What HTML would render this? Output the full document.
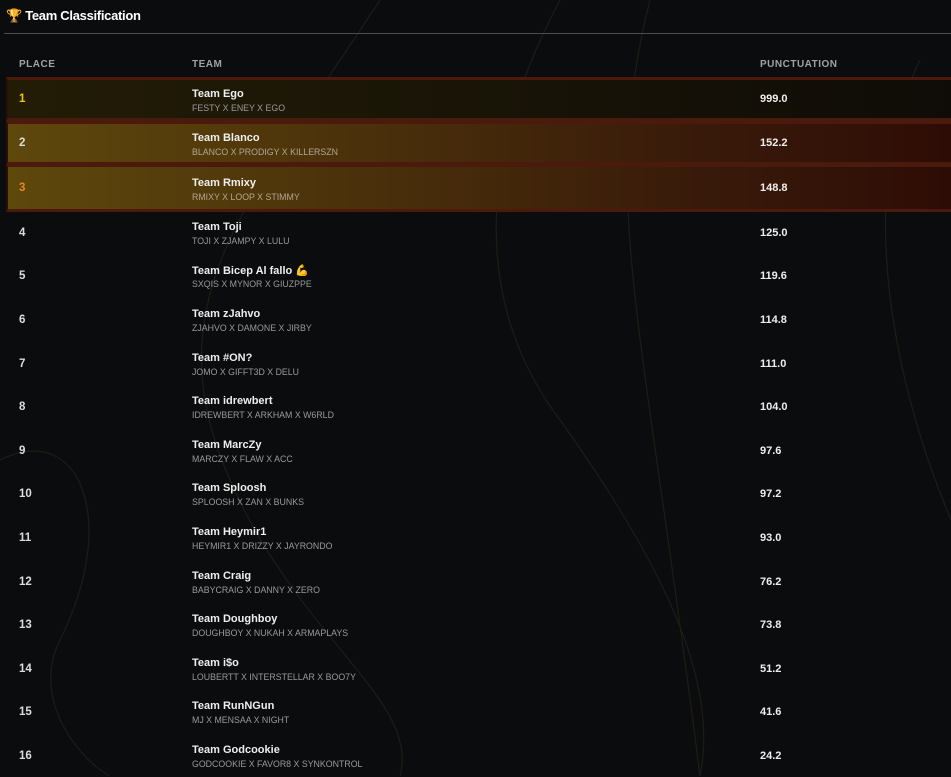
<!DOCTYPE html>
<html><head><meta charset="utf-8"><style>
*{margin:0;padding:0;box-sizing:border-box}
body{width:951px;height:776px;overflow:hidden;background:#0b0c0e;font-family:"Liberation Sans",sans-serif;position:relative;color:#e8e8e8}
.title{position:absolute;left:6px;top:8px;font-weight:bold;font-size:13px;color:#fff;letter-spacing:-0.3px}
.hr{position:absolute;left:4px;right:0;top:33px;height:1px;background:#4a4c50}
.th{position:absolute;top:59px;font-size:10px;font-weight:bold;color:#a0a2a6;letter-spacing:0.5px;font-family:"Liberation Sans Narrow","Liberation Sans",sans-serif}
.row{position:absolute;left:6px;right:0;height:43px}
.pl{position:absolute;left:13px;top:50%;transform:translateY(-50%);font-size:11.5px;font-weight:bold;color:#ddd}
.nm{position:absolute;left:186px;top:10px;font-size:11px;font-weight:bold;color:#eee}
.sub{position:absolute;left:186px;top:25px;font-size:8.8px;color:#9a9a9a}
.pt{position:absolute;left:754px;top:50%;transform:translateY(-50%);font-size:11px;font-weight:bold;color:#eee}
.hl{border-top:3px solid #4a1a0c;border-bottom:3px solid #4a1a0c;border-left:2px solid #2a0e08}
.hl .pl{left:11px}.hl .nm,.hl .sub{left:184px}.hl .pt{left:752px}
.hl .nm{top:8px}.hl .sub{top:23px}
</style></head><body>
<svg style="position:absolute;left:0;top:0" width="951" height="776"><g fill="none" stroke="#1f1c14" stroke-width="1.2">
<path d="M380 0 C250 200 150 300 230 480 C300 640 420 700 400 776"/>
<path d="M560 0 C480 150 470 300 560 420 C660 560 720 680 700 776"/>
<path d="M920 60 C850 200 900 400 951 520"/>
<path d="M0 460 C80 420 120 520 60 640 C30 700 80 760 110 776"/>
<path d="M650 0 C600 200 640 300 700 776"/>
</g></svg>
<div class="title"><span style="color:#e8b400">🏆</span> Team Classification</div>
<div class="hr"></div>
<div class="th" style="left:19px">PLACE</div>
<div class="th" style="left:192px">TEAM</div>
<div class="th" style="left:760px">PUNCTUATION</div>

<div class="row hl" style="top:77px;height:44px;background:linear-gradient(90deg,#221c06,#0f0c07)"><div class="pl" style="color:#f0c800">1</div><div class="nm">Team Ego</div><div class="sub">FESTY X ENEY X EGO</div><div class="pt">999.0</div></div>
<div class="row hl" style="top:121px;height:44px;background:linear-gradient(90deg,#5e480c,#3a1c0a 70%,#2e0c06)"><div class="pl">2</div><div class="nm">Team Blanco</div><div class="sub" style="color:#b0a890">BLANCO X PRODIGY X KILLERSZN</div><div class="pt">152.2</div></div>
<div class="row hl" style="top:164px;height:48px;background:linear-gradient(90deg,#5e480c,#3a1c0a 70%,#2e0c06)"><div class="pl" style="color:#e08a20">3</div><div class="nm" style="top:10px">Team Rmixy</div><div class="sub" style="color:#b0a890;top:25px">RMIXY X LOOP X STIMMY</div><div class="pt">148.8</div></div>

<div class="row" style="top:211px"><div class="pl">4</div><div class="nm">Team Toji</div><div class="sub">TOJI X ZJAMPY X LULU</div><div class="pt">125.0</div></div>
<div class="row" style="top:254px"><div class="pl">5</div><div class="nm">Team Bicep Al fallo <span style="color:#f0b030">💪</span></div><div class="sub">SXQIS X MYNOR X GIUZPPE</div><div class="pt">119.6</div></div>
<div class="row" style="top:298px"><div class="pl">6</div><div class="nm">Team zJahvo</div><div class="sub">ZJAHVO X DAMONE X JIRBY</div><div class="pt">114.8</div></div>
<div class="row" style="top:342px"><div class="pl">7</div><div class="nm">Team #ON?</div><div class="sub">JOMO X GIFFT3D X DELU</div><div class="pt">111.0</div></div>
<div class="row" style="top:385px"><div class="pl">8</div><div class="nm">Team idrewbert</div><div class="sub">IDREWBERT X ARKHAM X W6RLD</div><div class="pt">104.0</div></div>
<div class="row" style="top:429px"><div class="pl">9</div><div class="nm">Team MarcZy</div><div class="sub">MARCZY X FLAW X ACC</div><div class="pt">97.6</div></div>
<div class="row" style="top:472px"><div class="pl">10</div><div class="nm">Team Sploosh</div><div class="sub">SPLOOSH X ZAN X BUNKS</div><div class="pt">97.2</div></div>
<div class="row" style="top:516px"><div class="pl">11</div><div class="nm">Team Heymir1</div><div class="sub">HEYMIR1 X DRIZZY X JAYRONDO</div><div class="pt">93.0</div></div>
<div class="row" style="top:560px"><div class="pl">12</div><div class="nm">Team Craig</div><div class="sub">BABYCRAIG X DANNY X ZERO</div><div class="pt">76.2</div></div>
<div class="row" style="top:603px"><div class="pl">13</div><div class="nm">Team Doughboy</div><div class="sub">DOUGHBOY X NUKAH X ARMAPLAYS</div><div class="pt">73.8</div></div>
<div class="row" style="top:647px"><div class="pl">14</div><div class="nm">Team i$o</div><div class="sub">LOUBERTT X INTERSTELLAR X BOO7Y</div><div class="pt">51.2</div></div>
<div class="row" style="top:690px"><div class="pl">15</div><div class="nm">Team RunNGun</div><div class="sub">MJ X MENSAA X NIGHT</div><div class="pt">41.6</div></div>
<div class="row" style="top:734px"><div class="pl">16</div><div class="nm">Team Godcookie</div><div class="sub">GODCOOKIE X FAVOR8 X SYNKONTROL</div><div class="pt">24.2</div></div>
</body></html>
